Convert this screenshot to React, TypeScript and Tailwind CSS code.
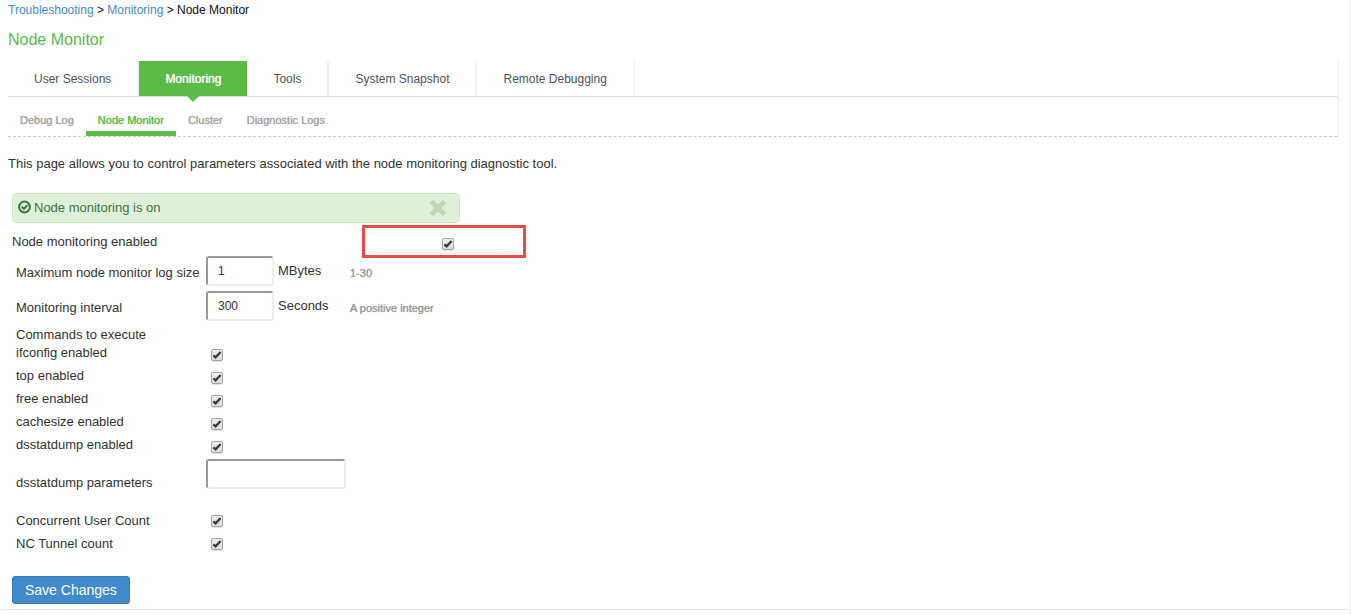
import React from 'react'
import clsx from 'clsx'

const tabs = ['User Sessions', 'Monitoring', 'Tools', 'System Snapshot', 'Remote Debugging']
const subTabs = ['Debug Log', 'Node Monitor', 'Cluster', 'Diagnostic Logs']

const commands = [
  { id: 'ifconfig', label: 'ifconfig enabled' },
  { id: 'top', label: 'top enabled' },
  { id: 'free', label: 'free enabled' },
  { id: 'cachesize', label: 'cachesize enabled' },
  { id: 'dsstatdump', label: 'dsstatdump enabled' },
]

const counters = [
  { id: 'users', label: 'Concurrent User Count' },
  { id: 'tunnels', label: 'NC Tunnel count' },
]

const inputClass =
  'h-[30px] rounded-[3px] border-2 border-t-[#999] border-l-[#999] border-r-[#eee] border-b-[#eee] bg-white px-2.5 text-xs text-[#333]'

// heavier than regular, without the wide set of the bold face
const semiBold = '[text-shadow:0_0_1px_currentColor]'

const Checkbox: React.FC<{ id: string }> = ({ id }) => (
  <span className="grid h-3 w-3">
    <input
      id={id}
      type="checkbox"
      defaultChecked
      className="peer col-start-1 row-start-1 h-3 w-3 appearance-none rounded-[2px] border border-[#a5a5a5] bg-linear-to-b from-[#ededed] to-[#dcdcdc] shadow-[0_1px_1px_rgba(0,0,0,0.12)]"
    />
    <svg
      viewBox="0 0 12 12"
      className="pointer-events-none col-start-1 row-start-1 hidden h-3 w-3 peer-checked:block"
      fill="none"
      stroke="#3c3c3c"
      strokeWidth="2.3"
    >
      <path d="M2.4 6.4 L4.6 8.4 L9.6 3" />
    </svg>
  </span>
)

type NumberRowProps = { id: string; label: string; value: string; unit: string; hint: string }

const NumberRow: React.FC<NumberRowProps> = ({ id, label, value, unit, hint }) => (
  <div className="flex h-[30px] items-start pl-2">
    <label htmlFor={id} className="w-[190px] pt-[7px] leading-5">
      {label}
    </label>
    <input id={id} type="text" defaultValue={value} className={clsx(inputClass, 'w-[68px]')} />
    <span className="w-[76px] pt-[5px] pl-1 leading-5">{unit}</span>
    <span className={clsx('pt-[7px] text-[11px] leading-5 text-[#999]', semiBold)}>{hint}</span>
  </div>
)

const CheckRow: React.FC<{ id: string; label: string }> = ({ id, label }) => (
  <div className="flex h-[23px] items-start pl-2">
    <label htmlFor={id} className="w-[195px] leading-[18px]">
      {label}
    </label>
    <div className="pt-[5px]">
      <Checkbox id={id} />
    </div>
  </div>
)

const App: React.FC = () => {
  return (
    <div className="min-h-screen border-r-2 border-[#f1f1f1] bg-white font-['Liberation_Sans',Arial,sans-serif] text-[13px] text-[#333]">
      <div className="pr-2.5 pl-2">
        <nav className="pt-0.5 text-xs leading-4 text-[#111]">
          <a href="#troubleshooting" className="text-[#428bca]">Troubleshooting</a>
          {' > '}
          <a href="#monitoring" className="text-[#428bca]">Monitoring</a>
          {' > '}
          <span>Node Monitor</span>
        </nav>
        <h1 className="mt-3 text-base leading-5 text-[#5cba47]">Node Monitor</h1>

        <div className="mt-[11px] border-r-2 border-[#f1f1f1]">
          <nav className="flex border-b border-[#d9d9d9] text-xs leading-[33px] text-[#4d5560]">
            {tabs.map((tab) => {
              const active = tab === 'Monitoring'
              return (
                <a
                  key={tab}
                  href="#tab"
                  className={clsx(
                    'px-[26px] pt-0.5',
                    active ? 'relative bg-[#5cba47] text-white' : 'border-r-2 border-[#f1f1f1]',
                    active && semiBold,
                  )}
                >
                  {tab}
                  {active && (
                    <svg viewBox="0 0 12 6" className="absolute top-full left-1/2 h-1.5 w-3 -translate-x-1/2 fill-[#5cba47]">
                      <path d="M0 0H12L6 6Z" />
                    </svg>
                  )}
                </a>
              )
            })}
          </nav>
          <nav className={clsx('flex border-b border-dashed border-[#c8c8c8] text-[11px] text-[#a3a3a3]', semiBold)}>
            {subTabs.map((tab) => (
              <a
                key={tab}
                href="#subtab"
                className={clsx(
                  'border-b-[5px] px-3 pt-[13px] pb-[1px] leading-5',
                  tab === 'Node Monitor' ? 'border-[#5cba47] text-[#5cba47]' : 'border-transparent',
                  semiBold,
                )}
              >
                {tab}
              </a>
            ))}
          </nav>
        </div>

        <p className="mt-[17px] leading-5">This page allows you to control parameters associated with the node monitoring diagnostic tool.</p>
      </div>

      <form className="mt-[19px] pl-2">
        <div className="ml-1 flex h-[30px] w-[448px] items-center rounded border border-[#d0e6bd] bg-[#dff0d8] pr-3 pl-[5px] text-[#3c763d]">
          <svg viewBox="0 0 14 14" className="mb-0.5 h-3.5 w-3.5" fill="none" stroke="currentColor" strokeWidth="2">
            <circle cx="6.5" cy="7" r="5.4" />
            <path d="M3.8 6.8L5.9 8.8L9.4 5.2" />
          </svg>
          <span className="ml-0.5 flex-1">Node monitoring is on</span>
          <button type="button" aria-label="Close">
            <svg viewBox="0 0 18 18" className="h-[18px] w-[18px]" stroke="#bfd8b8" strokeWidth="5">
              <path d="M2.5 2.5L15.5 15.5M15.5 2.5L2.5 15.5" />
            </svg>
          </button>
        </div>

        <div className="relative flex h-[33px] items-start pl-1">
          <label htmlFor="node" className="w-[430px] pt-[9px] leading-5">
            Node monitoring enabled
          </label>
          <div className="pt-[15px]">
            <Checkbox id="node" />
          </div>
          <div className="pointer-events-none absolute top-0.5 left-[354px] h-[33px] w-[164px] border-3 border-[#e94b47]" />
        </div>

        <div className="flex flex-col gap-[5px]">
          <NumberRow id="size" label="Maximum node monitor log size" value="1" unit="MBytes" hint="1-30" />
          <NumberRow id="interval" label="Monitoring interval" value="300" unit="Seconds" hint="A positive integer" />
        </div>

        <fieldset className="mt-[5px]">
          <legend className="pl-2 leading-[18px]">Commands to execute</legend>
          {commands.map((c) => (
            <CheckRow key={c.id} id={c.id} label={c.label} />
          ))}
        </fieldset>

        <div className="flex h-[50px] items-start pl-2">
          <label htmlFor="params" className="w-[190px] pt-3.5 leading-5">
            dsstatdump parameters
          </label>
          <input id="params" type="text" className={clsx(inputClass, 'w-[140px]')} />
        </div>

        {counters.map((c) => (
          <div key={c.id} className="flex h-[23px] items-center pl-2">
            <label htmlFor={c.id} className="w-[195px]">{c.label}</label>
            <Checkbox id={c.id} />
          </div>
        ))}

        <button type="submit" className="mt-[21px] ml-1 h-7 rounded-[3px] border border-[#357ebd] bg-[#428bca] px-3 text-sm text-white">
          Save Changes
        </button>
      </form>
      <hr className="mt-[5px] mr-0.5 ml-0.5 border-[#e5e5e5]" />
    </div>
  )
}

export default App
